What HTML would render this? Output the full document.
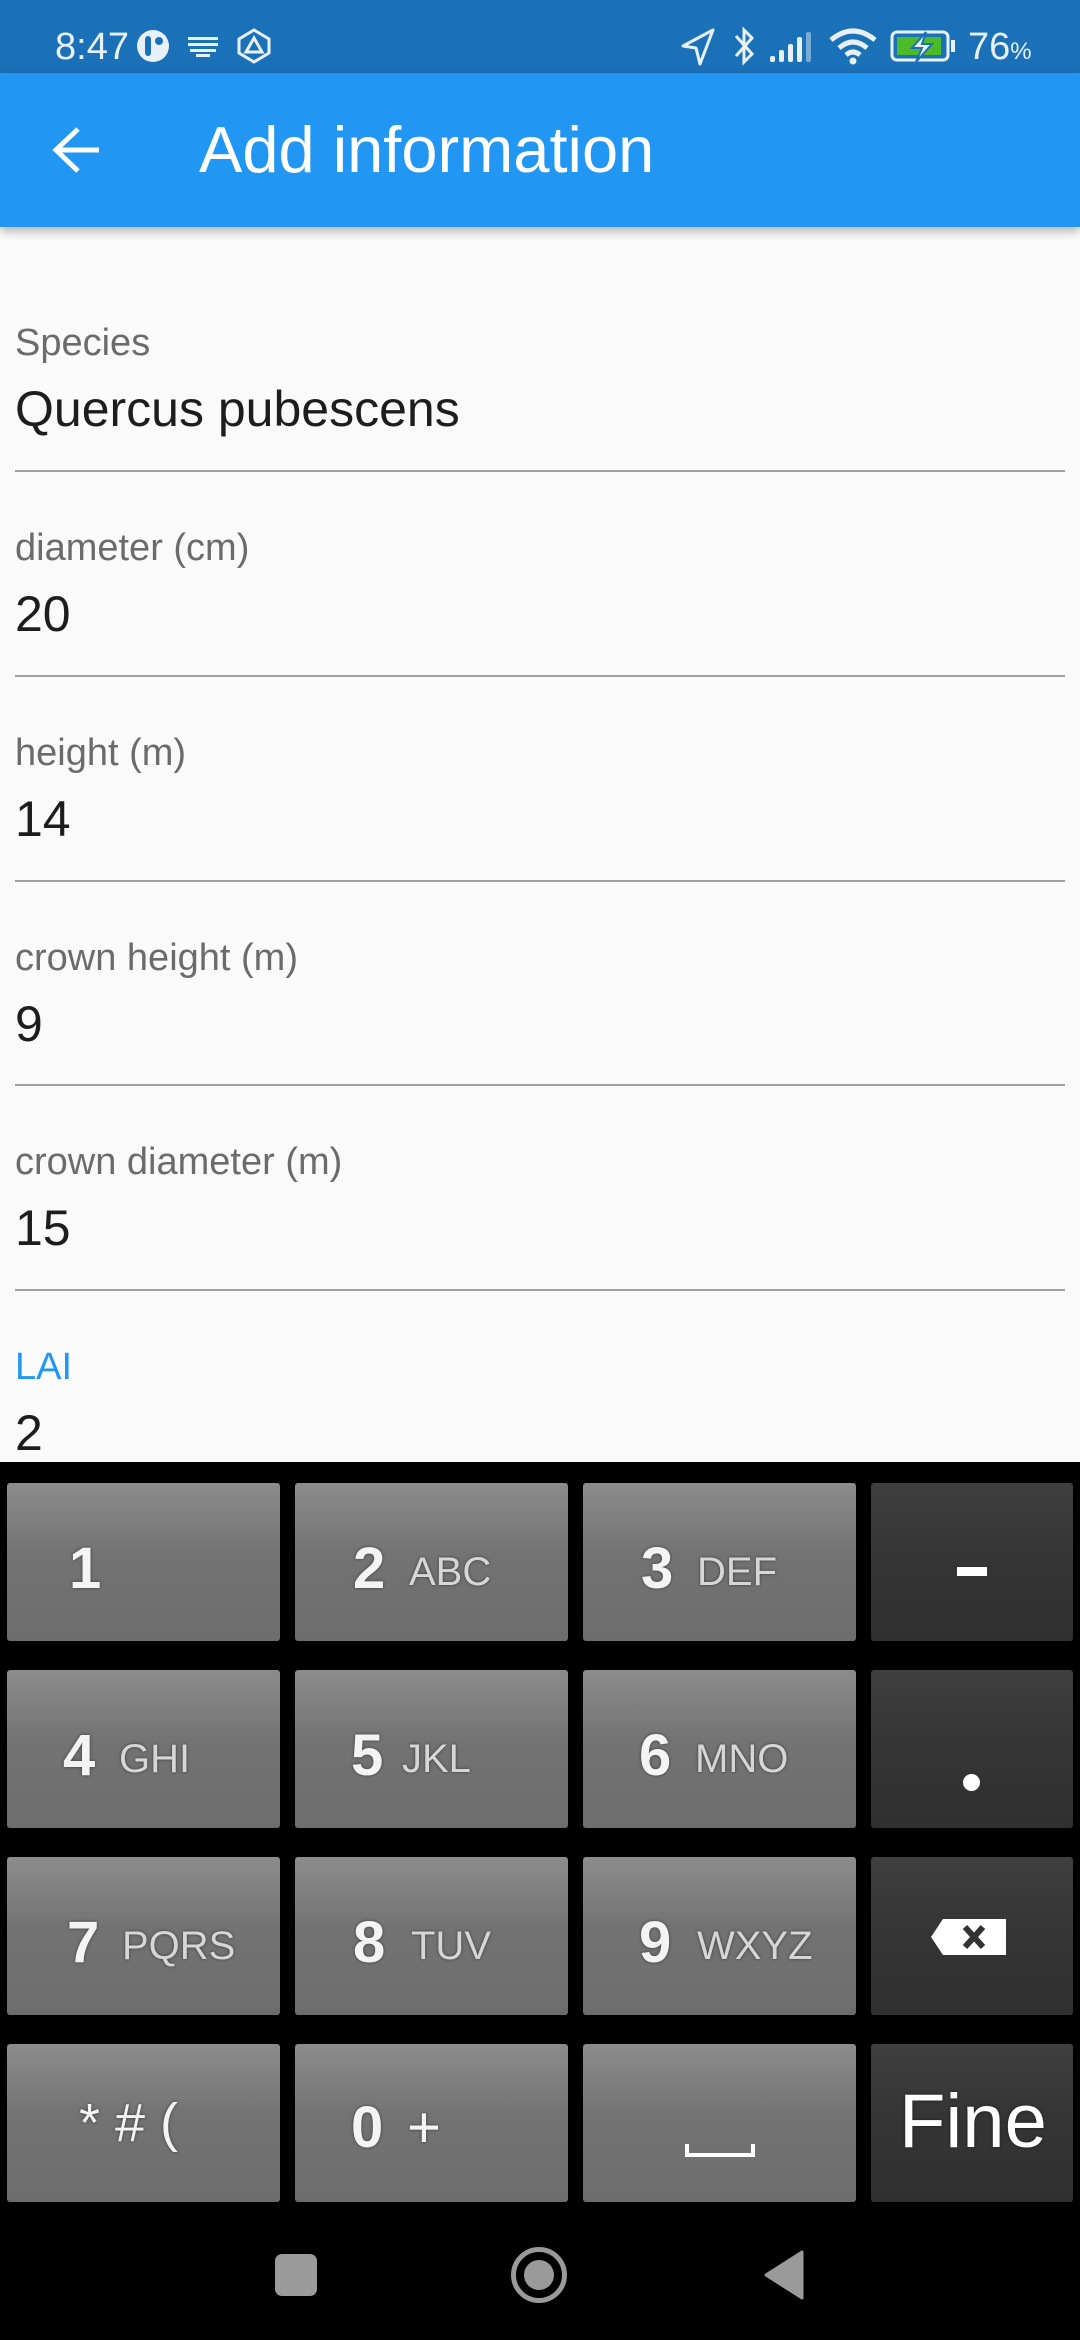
<!DOCTYPE html>
<html><head><meta charset="utf-8"><style>
*{margin:0;padding:0;box-sizing:border-box}
body{width:1080px;height:2340px;overflow:hidden;background:#fafafa;font-family:"Liberation Sans",sans-serif;position:relative}
.a{position:absolute;white-space:nowrap;line-height:normal}
.sb{position:absolute;left:0;top:0;width:1080px;height:73px;background:#1b71b8}
.ab{position:absolute;left:0;top:73px;width:1080px;height:154px;background:#2196f3;box-shadow:0 4px 10px rgba(0,0,0,.3)}
.lbl{font-size:38px;color:#6b6b6b}
.val{font-size:50px;color:#1d1d1d}
.ln{position:absolute;left:15px;width:1050px;height:2px;background:#a0a0a0}
.kb{position:absolute;left:0;top:1462px;width:1080px;height:878px;background:#000}
.k{position:absolute;width:273px;height:158px;background:linear-gradient(#8c8c8c,#737373 45%,#6d6d6d);border-radius:3px}
.d{width:202px;background:linear-gradient(#3f3f3f,#353535 45%,#303030)}
.n{position:absolute;font-weight:bold;font-size:58px;color:#f4f4f4;line-height:1;text-shadow:0 0 3px rgba(0,0,0,.5)}
.l{position:absolute;font-size:40px;color:#d6d6d6;line-height:1;text-shadow:0 0 3px rgba(0,0,0,.5)}
</style></head><body>
<div class="sb"></div>
<div class="a" style="left:55px;top:26px;font-size:38px;color:#e8f1fa">8:47</div>
<svg class="a" style="left:135px;top:28px" width="40" height="36" viewBox="0 0 40 36"><circle cx="18" cy="18" r="16" fill="#e8f1fa"/><rect x="10" y="8" width="6" height="20" rx="3" fill="#1b71b8"/><circle cx="24" cy="13" r="4" fill="#1b71b8"/></svg>
<svg class="a" style="left:188px;top:37px" width="32" height="20"><g fill="#e8f1fa"><rect x="0" y="0" width="30" height="3"/><rect x="0" y="6" width="30" height="3"/><rect x="2" y="12" width="26" height="3"/><rect x="8" y="17" width="14" height="3"/></g></svg>
<svg class="a" style="left:236px;top:28px" width="36" height="36" viewBox="0 0 36 36"><path d="M18 2 L33 11 V25 L18 34 L3 25 V11 Z" fill="none" stroke="#e8f1fa" stroke-width="3"/><path d="M18 10 L26 24 H10 Z" fill="none" stroke="#e8f1fa" stroke-width="3"/></svg>
<svg class="a" style="left:680px;top:28px" width="36" height="40"><path d="M33 2 L3 18 L16 20 L20 36 Z" fill="none" stroke="#e8f1fa" stroke-width="3" stroke-linejoin="round"/></svg>
<svg class="a" style="left:732px;top:26px" width="26" height="40"><path d="M4 10 L20 28 L12 36 V4 L20 12 L4 30" fill="none" stroke="#e8f1fa" stroke-width="3"/></svg>
<svg class="a" style="left:770px;top:30px" width="50" height="34"><g fill="#e8f1fa"><rect x="0" y="26" width="5" height="6" rx="2"/><rect x="9" y="20" width="5" height="12" rx="2"/><rect x="18" y="14" width="5" height="18" rx="2"/><rect x="27" y="7" width="5" height="25" rx="2"/><rect x="36" y="2" width="5" height="30" rx="2" opacity=".45"/></g></svg>
<svg class="a" style="left:828px;top:28px" width="50" height="38" viewBox="0 0 50 38"><path d="M3 12 Q25 -6 47 12" fill="none" stroke="#e8f1fa" stroke-width="5"/><path d="M11 20 Q25 8 39 20" fill="none" stroke="#e8f1fa" stroke-width="5"/><path d="M18 27 Q25 21 32 27" fill="none" stroke="#e8f1fa" stroke-width="5"/><circle cx="25" cy="33" r="3.5" fill="#e8f1fa"/></svg>
<svg class="a" style="left:890px;top:30px" width="70" height="34"><rect x="2" y="2" width="56" height="28" rx="5" fill="none" stroke="#e8f1fa" stroke-width="3"/><rect x="7" y="7" width="44" height="18" fill="#4cbb2a"/><rect x="61" y="10" width="4" height="12" fill="#e8f1fa"/><path d="M36 2 L22 18 H32 L26 32 L42 14 H32 Z" fill="#e8f1fa" stroke="#1b71b8" stroke-width="2"/></svg>
<div class="a" style="left:968px;top:26px;font-size:38px;color:#e8f1fa">76<span style="font-size:24px">%</span></div>

<div class="ab"></div>
<svg class="a" style="left:52px;top:126px" width="50" height="48" viewBox="0 0 50 48"><path d="M26 3 L4 24 L26 45 M4 24 H47" fill="none" stroke="#fff" stroke-width="5"/></svg>
<div class="a" style="left:199px;top:112px;font-size:65px;color:#fff">Add information</div>

<div class="a lbl" style="left:15px;top:322px">Species</div>
<div class="a val" style="left:15px;top:380px">Quercus pubescens</div>
<div class="ln" style="top:470px"></div>
<div class="a lbl" style="left:15px;top:527px">diameter (cm)</div>
<div class="a val" style="left:15px;top:585px">20</div>
<div class="ln" style="top:675px"></div>
<div class="a lbl" style="left:15px;top:732px">height (m)</div>
<div class="a val" style="left:15px;top:790px">14</div>
<div class="ln" style="top:880px"></div>
<div class="a lbl" style="left:15px;top:937px">crown height (m)</div>
<div class="a val" style="left:15px;top:995px">9</div>
<div class="ln" style="top:1084px"></div>
<div class="a lbl" style="left:15px;top:1141px">crown diameter (m)</div>
<div class="a val" style="left:15px;top:1199px">15</div>
<div class="ln" style="top:1289px"></div>
<div class="a lbl" style="left:15px;top:1346px;color:#2196f3">LAI</div>
<div class="a val" style="left:15px;top:1404px">2</div>

<div class="kb"></div>
<div class="k" style="left:7px;top:1483px"><span class="n" style="left:62px;top:57px">1</span></div>
<div class="k" style="left:295px;top:1483px"><span class="n" style="left:58px;top:57px">2</span><span class="l" style="left:114px;top:69px">ABC</span></div>
<div class="k" style="left:583px;top:1483px"><span class="n" style="left:58px;top:57px">3</span><span class="l" style="left:114px;top:69px">DEF</span></div>
<div class="k d" style="left:871px;top:1483px"><div style="position:absolute;left:86px;top:84px;width:30px;height:9px;background:#fff"></div></div>
<div class="k" style="left:7px;top:1670px"><span class="n" style="left:56px;top:57px">4</span><span class="l" style="left:112px;top:69px">GHI</span></div>
<div class="k" style="left:295px;top:1670px"><span class="n" style="left:56px;top:57px">5</span><span class="l" style="left:107px;top:69px">JKL</span></div>
<div class="k" style="left:583px;top:1670px"><span class="n" style="left:56px;top:57px">6</span><span class="l" style="left:112px;top:69px">MNO</span></div>
<div class="k d" style="left:871px;top:1670px"><div style="position:absolute;left:92px;top:104px;width:17px;height:17px;border-radius:50%;background:#fff"></div></div>
<div class="k" style="left:7px;top:1857px"><span class="n" style="left:60px;top:57px">7</span><span class="l" style="left:115px;top:69px">PQRS</span></div>
<div class="k" style="left:295px;top:1857px"><span class="n" style="left:58px;top:57px">8</span><span class="l" style="left:116px;top:69px">TUV</span></div>
<div class="k" style="left:583px;top:1857px"><span class="n" style="left:56px;top:57px">9</span><span class="l" style="left:114px;top:69px">WXYZ</span></div>
<div class="k d" style="left:871px;top:1857px"><svg style="position:absolute;left:58px;top:60px" width="80" height="40" viewBox="0 0 80 40"><path d="M14 2 H77 V38 H14 L2 20 Z" fill="#fff"/><path d="M36 10 L54 30 M54 10 L36 30" stroke="#333" stroke-width="6"/></svg></div>
<div class="k" style="left:7px;top:2044px"><span class="n" style="left:72px;top:52px;font-weight:normal;font-size:54px">* # (</span></div>
<div class="k" style="left:295px;top:2044px"><span class="n" style="left:56px;top:55px">0</span><span class="n" style="left:112px;top:55px;font-weight:normal">+</span></div>
<div class="k" style="left:583px;top:2044px"><div style="position:absolute;left:102px;top:100px;width:70px;height:13px;border:4px solid #fff;border-top:none"></div></div>
<div class="k d" style="left:871px;top:2044px"><span class="n" style="left:28px;top:40px;font-weight:normal;font-size:76px;color:#fff">Fine</span></div>

<div style="position:absolute;left:275px;top:2254px;width:42px;height:42px;border-radius:7px;background:#9a9a9a"></div>
<div style="position:absolute;left:511px;top:2247px;width:56px;height:56px;border-radius:50%;border:5px solid #9a9a9a"></div>
<div style="position:absolute;left:524px;top:2260px;width:30px;height:30px;border-radius:50%;background:#9a9a9a"></div>
<svg class="a" style="left:762px;top:2250px" width="42" height="50"><path d="M40 2 V48 L4 25 Z" fill="#9a9a9a" stroke="#9a9a9a" stroke-width="3" stroke-linejoin="round"/></svg>
</body></html>
